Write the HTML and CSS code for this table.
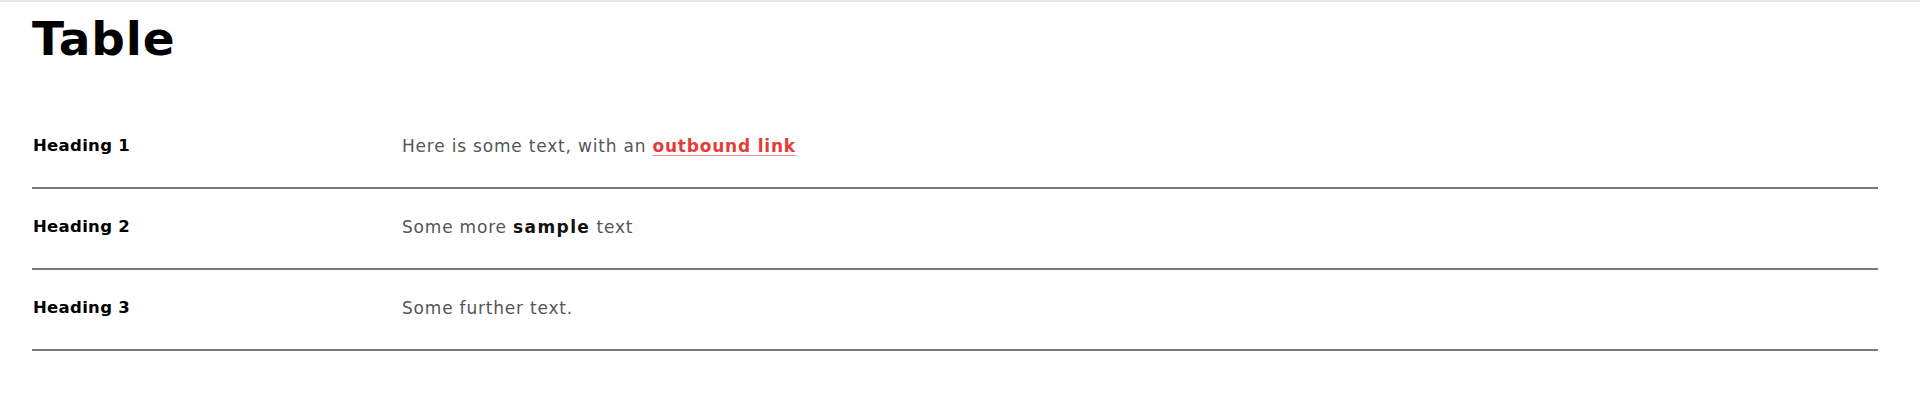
FILE: index.html
```html
<!DOCTYPE html>
<html lang="en">
<head>
<meta charset="utf-8">
<title>Table</title>
<link rel="stylesheet" href="styles.css">
</head>
<body>
<div class="topbar"></div>
<main class="page">
  <h1 class="title">Table</h1>
  <table class="data-table">
    <tbody>
      <tr>
        <th class="cell-head">Heading 1</th>
        <td class="cell-body">Here is some text, with an <a class="link" href="#">outbound link</a></td>
      </tr>
      <tr>
        <th class="cell-head">Heading 2</th>
        <td class="cell-body">Some more <strong class="strong">sample</strong> text</td>
      </tr>
      <tr>
        <th class="cell-head">Heading 3</th>
        <td class="cell-body">Some further text.</td>
      </tr>
    </tbody>
  </table>
</main>
</body>
</html>
```
FILE: styles.css
```css
html, body {
  margin: 0;
  padding: 0;
  background: #ffffff;
}

body {
  font-family: "DejaVu Sans", "Noto Sans", sans-serif;
  color: #000;
}

.topbar {
  height: 2px;
  background: #e6e6e6;
}

.page {
  padding: 0 42px 0 32px;
}

.title {
  margin: 13px 0 46px 0;
  font-size: 47px;
  line-height: 1;
  font-weight: 700;
  color: #000;
  letter-spacing: 0.8px;
}

.data-table {
  width: 100%;
  border-collapse: collapse;
}

.data-table tr {
  border-bottom: 2px solid #7a7a7a;
}

.cell-head {
  width: 369px;
  height: 75px;
  padding: 0 0 4px 1px;
  text-align: left;
  vertical-align: middle;
  font-size: 16.5px;
  font-weight: 700;
  letter-spacing: 0.3px;
  color: #000;
}

.cell-body {
  padding: 0 0 4px 0;
  vertical-align: middle;
  font-size: 17px;
  letter-spacing: 0.8px;
  color: #555555;
}

.strong {
  font-weight: 700;
  letter-spacing: 1.4px;
  color: #111;
}

.link {
  color: #e53d36;
  font-weight: 700;
  text-decoration: underline;
  text-decoration-color: #ef8f8a;
  text-underline-offset: 3px;
}
```
